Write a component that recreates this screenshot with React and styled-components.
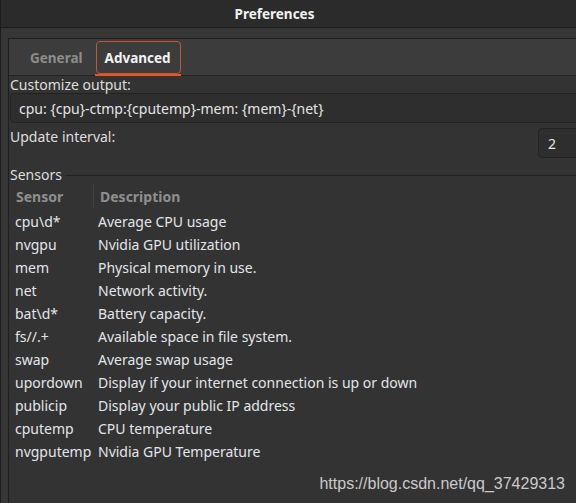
import React from 'react'
import styled, { createGlobalStyle } from 'styled-components'

const GlobalStyle = createGlobalStyle`
  html, body {
    margin: 0;
    padding: 0;
    background: #333333;
  }
  body {
    font-family: "Noto Sans", "DejaVu Sans", sans-serif;
  }
`

const Window = styled.div`
  position: relative;
  width: 576px;
  height: 503px;
  overflow: hidden;
  background: #363636;
  border-left: 1px solid #1c1c1c;
  box-sizing: border-box;
`

const TitleBar = styled.div`
  height: 27px;
  background: #2b2b2b;
  border-bottom: 1px solid #1c1c1c;
  display: flex;
  align-items: center;
  justify-content: center;
  padding-right: 28px;
  color: #f2f2f2;
  font-size: 13.5px;
  font-weight: 700;
`

const Notebook = styled.div`
  margin: 10px 0 0 7px;
  border-left: 1px solid #1f1f1f;
  border-top: 1px solid #1f1f1f;
  background: #333333;
  height: 470px;
`

const TabBar = styled.div`
  height: 36px;
  background: #3c3c3c;
  border-bottom: 1px solid #242424;
  display: flex;
  align-items: flex-end;
  gap: 3px;
  padding-left: 12px;
`

const Tab = styled.div`
  position: relative;
  height: 33px;
  box-sizing: border-box;
  display: flex;
  align-items: center;
  padding: 0 9px 0 8px;
  font-size: 13.5px;
  font-weight: 700;
  color: ${p => (p.$active ? '#f4f4f4' : '#8c8c8c')};
  border: 1px solid ${p => (p.$active ? '#b85a35' : 'transparent')};
  border-radius: 4px;
  margin-bottom: 1px;

  &::after {
    content: '';
    display: ${p => (p.$active ? 'block' : 'none')};
    position: absolute;
    left: -2px;
    right: -1px;
    bottom: -3px;
    height: 2px;
    background: #e95420;
  }
`

const Page = styled.div`
  padding-left: 1px;
  color: #dedede;
  font-size: 14px;
`

const Label = styled.div`
  height: 17px;
  line-height: 18px;
`

const Entry = styled.div`
  height: 30px;
  box-sizing: border-box;
  margin-right: -10px;
  border: 1px solid #222222;
  border-radius: 4px;
  background: #2e2e2e;
  padding-left: 8px;
  display: flex;
  align-items: center;
  color: #e4e4e4;
`

const Row = styled.div`
  margin-top: 5px;
  display: flex;
  justify-content: space-between;
  align-items: flex-start;
`

const SpinBox = styled.div`
  width: 60px;
  height: 30px;
  box-sizing: border-box;
  margin-right: -22px;
  border: 1px solid #222222;
  border-radius: 4px;
  background: #2e2e2e;
  padding-left: 9px;
  display: flex;
  align-items: center;
  color: #e4e4e4;
`

const FrameHeader = styled.div`
  margin-top: 7px;
  height: 18px;
  display: flex;
  align-items: center;
  gap: 3px;
`

const FrameLine = styled.div`
  flex: 1;
  height: 1px;
  background: #222222;
  margin-top: 3px;
`

const TreeHeader = styled.div`
  height: 27px;
  display: grid;
  grid-template-columns: 83px 1fr;
  color: #8f8f8f;
  font-weight: 700;
  font-size: 14px;
`

const HeaderCell = styled.div`
  display: flex;
  align-items: center;
  padding-left: 6px;
  ${p => p.$sep && `
    border-left: 1px solid #414141;
    margin: 2px 0 3px;
  `}
`

const TreeRow = styled.div`
  height: 23px;
  display: grid;
  grid-template-columns: 83px 1fr;
  align-items: center;
  color: #e2e6ea;
  white-space: nowrap;
`

const Cell = styled.div`
  padding-left: 5px;
`

const Watermark = styled.div`
  position: absolute;
  right: 11px;
  bottom: 10px;
  font-family: "Liberation Sans", Arial, sans-serif;
  font-size: 16px;
  color: #cacaca;
`

const sensors = [
  ['cpu\\d*', 'Average CPU usage'],
  ['nvgpu', 'Nvidia GPU utilization'],
  ['mem', 'Physical memory in use.'],
  ['net', 'Network activity.'],
  ['bat\\d*', 'Battery capacity.'],
  ['fs//.+', 'Available space in file system.'],
  ['swap', 'Average swap usage'],
  ['upordown', 'Display if your internet connection is up or down'],
  ['publicip', 'Display your public IP address'],
  ['cputemp', 'CPU temperature'],
  ['nvgputemp', 'Nvidia GPU Temperature'],
]

export default function App() {
  return (
    <Window>
      <GlobalStyle />
      <TitleBar>Preferences</TitleBar>
      <Notebook>
        <TabBar>
          <Tab>General</Tab>
          <Tab $active>Advanced</Tab>
        </TabBar>
        <Page>
          <Label>Customize output:</Label>
          <Entry>cpu: {'{cpu}'}-ctmp:{'{cputemp}'}-mem: {'{mem}'}-{'{net}'}</Entry>
          <Row>
            <Label>Update interval:</Label>
            <SpinBox>2</SpinBox>
          </Row>
          <FrameHeader>
            <span>Sensors</span>
            <FrameLine />
          </FrameHeader>
          <TreeHeader>
            <HeaderCell>Sensor</HeaderCell>
            <HeaderCell $sep>Description</HeaderCell>
          </TreeHeader>
          {sensors.map(([name, desc]) => (
            <TreeRow key={name}>
              <Cell>{name}</Cell>
              <Cell>{desc}</Cell>
            </TreeRow>
          ))}
        </Page>
      </Notebook>
      <Watermark>https://blog.csdn.net/qq_37429313</Watermark>
    </Window>
  )
}
